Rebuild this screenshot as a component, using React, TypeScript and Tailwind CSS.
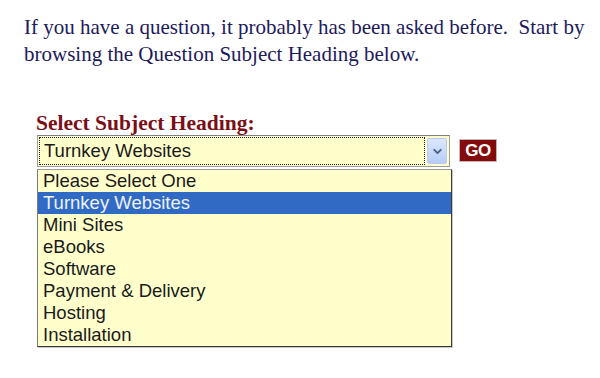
import { ChevronDown } from "lucide-react";

const options = [
  "Please Select One",
  "Turnkey Websites",
  "Mini Sites",
  "eBooks",
  "Software",
  "Payment & Delivery",
  "Hosting",
  "Installation",
];

export default function App() {
  return (
    <div className="w-[600px] h-[378px] bg-white overflow-hidden">
      <p className="pl-6 pr-2 pt-[14px] text-[21px] leading-[27px] text-[#1d1a5c] font-['Liberation_Serif',serif]">
        If you have a question, it probably has been asked before.&nbsp; Start by browsing the Question Subject
        Heading below.
      </p>

      <div className="ml-[36px] mt-[44px]">
        <h2 className="text-[21.5px] leading-[22px] font-bold text-[#7a0f17] font-['Liberation_Serif',serif]">
          Select Subject Heading:
        </h2>

        <div className="flex items-start mt-px ml-px">
          <div className="relative w-[413px] h-[32px] bg-[#ffffcc] border border-[#9c9c9c] border-t-[#808080]">
            <div className="absolute left-px top-px bottom-px right-[24px] border border-dotted border-[#222] flex items-center pl-[4px]">
              <span className="text-[18.5px] text-[#1a1a1a] font-['Liberation_Sans',Arial,sans-serif]">
                Turnkey Websites
              </span>
            </div>
            <div className="absolute right-[2px] top-[2px] bottom-[2px] w-[20px] rounded-[2px] border border-[#b9cdf3] bg-gradient-to-b from-[#dce7fd] to-[#b5cdf8] flex items-center justify-center">
              <ChevronDown className="w-[13px] h-[13px] text-[#4b5f86]" strokeWidth={3.5} />
            </div>

            <ul className="absolute -left-px top-[33px] w-[415px] bg-[#ffffcc] border border-[#3a3a3a] border-l-[#7a7a7a] border-t-[#9a9a9a] shadow-[1px_1px_0_#c8c8c8] font-['Liberation_Sans',Arial,sans-serif] text-[18.5px] text-[#1a1a1a]">
              {options.map((o) => (
                <li
                  key={o}
                  className={
                    o === "Turnkey Websites"
                      ? "h-[22px] leading-[22px] pl-[5px] bg-[#316ac5] text-[#eef2fb]"
                      : "h-[22px] leading-[22px] pl-[5px]"
                  }
                >
                  {o}
                </li>
              ))}
            </ul>
          </div>

          <button className="ml-[9px] mt-[4px] w-[38px] h-[23px] bg-[#840b0b] border border-[#c7b5b5] text-white font-bold text-[17px] leading-none tracking-[-0.5px] font-['Liberation_Sans',Arial,sans-serif] flex items-center justify-center">
            GO
          </button>
        </div>
      </div>
    </div>
  );
}
